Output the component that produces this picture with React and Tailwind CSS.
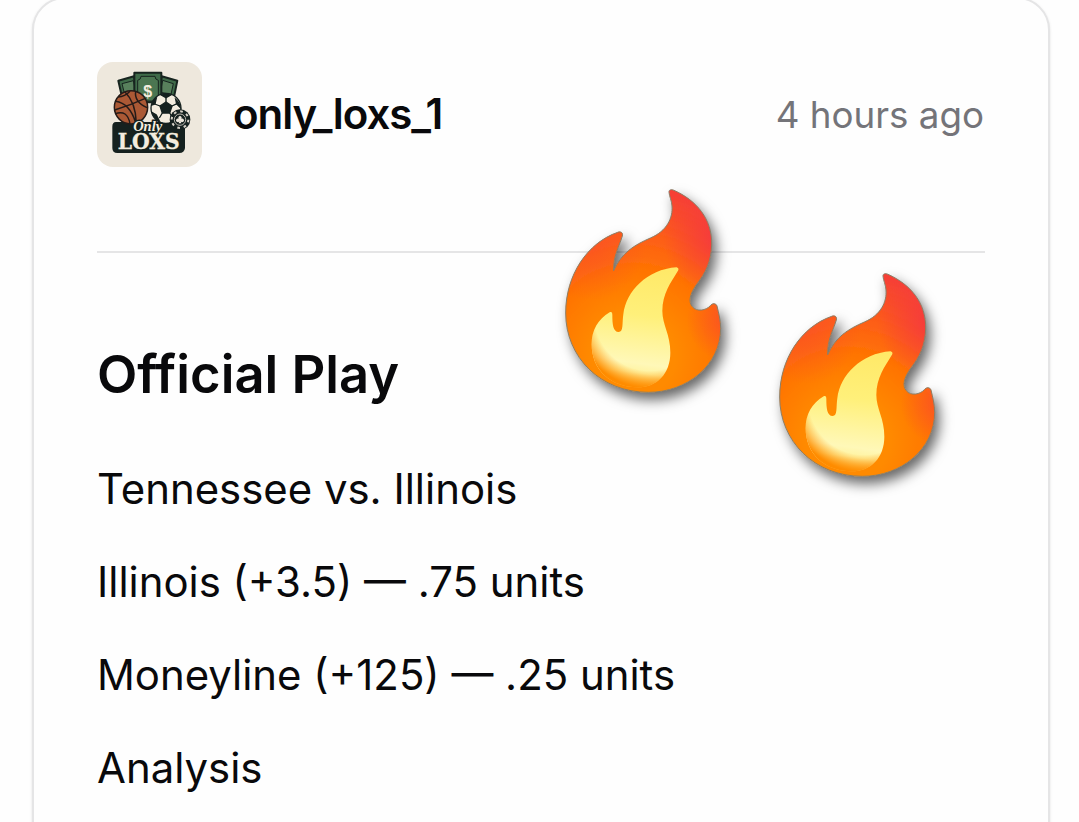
import { useId } from "react";

const lines = [
  "Tennessee vs. Illinois",
  "Illinois (+3.5) — .75 units",
  "Moneyline (+125) — .25 units",
  "Analysis",
];

function Avatar() {
  return (
    <svg viewBox="21 21 315 315" className="size-[105px] shrink-0 rounded-[16px] bg-[#eee8dd]" role="img" aria-label="Only Loxs">
      {/* bills */}
      <g stroke="#17241f" strokeWidth="6" strokeLinejoin="round">
        <g fill="#3f6b49">
          <path d="M85 77 132 64 142 116 96 126Z" />
          <path d="M215 64 262 77 252 126 206 118Z" />
          <path d="M96 86 130 77 138 112 104 118Z" fill="#58805c" strokeWidth="3" />
          <path d="M218 76 250 86 243 118 211 112Z" fill="#58805c" strokeWidth="3" />
        </g>
        <path d="M133 53H214V142H133Z" fill="#3f6b49" />
        <path d="M153 64H195Q195 74 205 76V138H143V76Q153 74 153 64Z" fill="#4b7651" strokeWidth="3" />
      </g>
      <text x="173" y="126" textAnchor="middle" fill="#f4eddf" className="font-['Liberation_Sans',sans-serif] text-[48px] font-bold">$</text>
      {/* sign */}
      <path d="M78 201H264Q285 205 285 222V279Q283 294 268 294H82Q67 294 67 279V215Q67 201 78 201Z" fill="#15211f" />
      {/* basketball */}
      <g stroke="#251b18" strokeWidth="4.5" fill="none">
        <circle cx="123" cy="157" r="50" fill="#ab5935" />
        <path d="M74 165Q122 150 166 130M105 111Q137 142 139 204M137 109Q132 140 171 158M77 139Q119 145 137 203M76 176Q112 163 120 206M84 126Q105 125 120 109" />
      </g>
      {/* football */}
      <g stroke="#15211f" strokeWidth="4">
        <circle cx="228" cy="160" r="45" fill="#f4eddf" />
        <path d="M228 141 246 153 239 174H217L210 153Z" fill="#15211f" />
        <path d="M228 141V126M246 153 261 146M239 174 248 189M217 174 208 189M210 153 194 147" fill="none" />
        <path d="M212 119Q228 113 244 119L228 128ZM257 133Q269 144 271 158L260 147ZM186 150Q190 134 199 129L195 147ZM187 173 199 180 208 198Q192 190 187 173ZM248 188 260 178 265 182Q258 195 242 201Z" fill="#15211f" />
      </g>
      {/* poker chip */}
      <circle cx="270" cy="194" r="31" fill="#15211f" />
      <circle cx="270" cy="194" r="25" fill="none" stroke="#d9d4ca" strokeWidth="6" strokeDasharray="8 11.6" />
      <circle cx="270" cy="194" r="17" fill="#15211f" stroke="#d9d4ca" strokeWidth="2.5" />
      <path d="M270 183a5 5 0 0 1 4 8 5.5 5.5 0 1 1-2 8l2 6h-8l2-6a5.5 5.5 0 1 1-2-8 5 5 0 0 1 4-8Z" fill="#eee8dd" />
      <text x="173" y="227" textAnchor="middle" textLength="87" lengthAdjust="spacingAndGlyphs" fill="#f4eddf" stroke="#15211f" strokeWidth="9" paintOrder="stroke" className="font-['Liberation_Serif',serif] text-[46px] font-bold italic">Only</text>
      <text x="176" y="281" textAnchor="middle" textLength="186" lengthAdjust="spacingAndGlyphs" fill="#f4eddf" stroke="#f4eddf" strokeWidth="1" className="font-['DejaVu_Serif',serif] text-[66px] font-bold">LOXS</text>
    </svg>
  );
}

function Flame({ className }) {
  const id = useId();
  return (
    <svg viewBox="0 0 570 720" className={`absolute h-[240px] w-[190px] overflow-visible ${className}`} aria-hidden="true">
      <defs>
        <radialGradient id={`${id}o`} gradientUnits="userSpaceOnUse" cx="250" cy="530" r="500">
          <stop offset="0.25" stopColor="#ff8a00" />
          <stop offset="0.5" stopColor="#ff7600" />
          <stop offset="0.72" stopColor="#fd5f16" />
          <stop offset="1" stopColor="#f64035" />
        </radialGradient>
        <radialGradient id={`${id}r`} gradientUnits="userSpaceOnUse" cx="510" cy="175" r="170">
          <stop offset="0" stopColor="#f53840" />
          <stop offset="0.3" stopColor="#f53840" stopOpacity="0.65" />
          <stop offset="1" stopColor="#f53840" stopOpacity="0" />
        </radialGradient>
        <radialGradient id={`${id}s`} gradientUnits="userSpaceOnUse" cx="535" cy="420" r="125">
          <stop offset="0" stopColor="#fb4d2b" stopOpacity="0.85" />
          <stop offset="1" stopColor="#fb4d2b" stopOpacity="0" />
        </radialGradient>
        <radialGradient id={`${id}l`} gradientUnits="userSpaceOnUse" cx="120" cy="190" r="170">
          <stop offset="0" stopColor="#fa4d2a" stopOpacity="0.6" />
          <stop offset="1" stopColor="#fa4d2a" stopOpacity="0" />
        </radialGradient>
        <linearGradient id={`${id}y`} gradientUnits="userSpaceOnUse" x1="310" y1="265" x2="262" y2="622">
          <stop offset="0" stopColor="#ffe968" />
          <stop offset="0.4" stopColor="#fff07a" />
          <stop offset="0.8" stopColor="#fff8b8" />
          <stop offset="0.88" stopColor="#fff3a0" />
          <stop offset="1" stopColor="#ffb030" />
        </linearGradient>
        <radialGradient id={`${id}g`} gradientUnits="userSpaceOnUse" cx="300" cy="405" r="220">
          <stop offset="0.76" stopColor="#ff9b12" stopOpacity="0" />
          <stop offset="1" stopColor="#ff8c00" />
        </radialGradient>
        <filter id={`${id}f`} x="-20%" y="-20%" width="150%" height="150%">
          <feDropShadow dx="14" dy="22" stdDeviation="19" floodColor="#000" floodOpacity="0.6" />
        </filter>
        <path id={`${id}p`} d="M357 37C356 29 364 27 372 31C439 61 487 116 485 195C483 246 467 278 440 313C420 341 414 365 427 380C440 397 469 391 481 377C487 369 498 369 501 378C506 399 512 422 512 445C512 556 411 637 295 637C152 637 47 532 47 399C47 284 113 188 203 157C212 153 220 158 217 168C207 202 190 226 191 272C214 219 251 196 301 174C351 153 369 113 366 78C365 62 358 49 357 37Z" />
        <path id={`${id}i`} d="M380 262C386 264 387 268 383 274C363 307 337 341 337 393C337 435 361 463 361 518C361 580 321 622 263 622C181 622 125 569 125 493C125 450 144 418 179 397C185 394 187 398 187 405C187 432 189 456 206 456C221 456 216 430 220 403C228 334 291 268 380 262Z" />
        <clipPath id={`${id}c`}>
          <path d="M60 430H420V700H60Z" />
        </clipPath>
      </defs>
      <use href={`#${id}p`} fill={`url(#${id}o)`} filter={`url(#${id}f)`} />
      <use href={`#${id}p`} fill={`url(#${id}r)`} />
      <use href={`#${id}p`} fill={`url(#${id}l)`} />
      <use href={`#${id}p`} fill={`url(#${id}s)`} stroke="#8b7f68" strokeWidth="3" />
      <use href={`#${id}i`} fill={`url(#${id}y)`} />
      <use href={`#${id}i`} fill={`url(#${id}g)`} clipPath={`url(#${id}c)`} />
    </svg>
  );
}

export default function App() {
  return (
    <main className="relative h-[822px] overflow-hidden bg-[#fefefe] px-[32px] font-['Inter',sans-serif] text-[#09090b]">
      <article className="-mt-[3px] h-[900px] w-[1018px] rounded-[33px] border-2 border-[#e5e5e6] bg-[#fefefe] px-[63px] pt-[63px] shadow-sm">
        <header className="flex h-[105px] items-center">
          <Avatar />
          <span className="ml-[31px] pb-[2px] text-[42px] font-semibold tracking-[-0.025em]">only_loxs_1</span>
          <time className="mr-px ml-auto text-[36.75px] text-[#747479]">4 hours ago</time>
        </header>
        <hr className="mt-[84px] border-t-2 border-[#e5e5e6]" />
        <h1 className="mt-[83px] text-[52.5px] leading-[76px] font-semibold">Official Play</h1>
        <div className="mt-[44px] flex flex-col gap-[27px]">
          {lines.map((line) => (
            <p key={line} className="text-[41.9px] leading-[66px]">{line}</p>
          ))}
        </div>
      </article>

      <Flame className="top-[180px] left-[550px]" />
      <Flame className="top-[264px] left-[764px]" />
    </main>
  );
}
